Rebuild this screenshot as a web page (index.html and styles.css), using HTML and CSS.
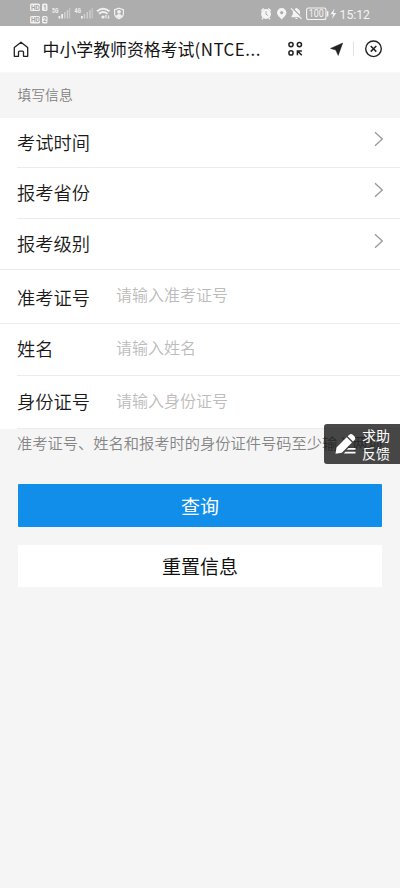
FILE: index.html
```
<!DOCTYPE html>
<html lang="zh-CN">
<head>
<meta charset="utf-8">
<meta name="viewport" content="width=device-width, initial-scale=1">
<title>中小学教师资格考试(NTCE)</title>
<link rel="stylesheet" href="styles.css">
</head>
<body>
<header class="status">
  <svg class="status-left" width="100" height="26" viewBox="0 0 100 26">
    <g fill="#f1f1f1">
      <rect x="0" y="3.500" width="10" height="7.500" rx="1.500"/><rect x="12" y="3.500" width="5.500" height="7.500" rx="1.500"/>
      <rect x="0" y="16" width="10" height="7.500" rx="1.500"/><rect x="12" y="16" width="5.500" height="7.500" rx="1.500"/>
    </g>
    <g class="tiny" fill="#a6a6a6">
      <text x="1" y="9.700">HD</text><text x="13" y="9.700">1</text>
      <text x="1" y="22.200">HD</text><text x="13" y="22.200">2</text>
    </g>
    <g class="tiny" fill="#f1f1f1"><text x="22" y="12.500" textLength="6.300" lengthAdjust="spacingAndGlyphs">5G</text><text x="44.500" y="12.500" textLength="6.300" lengthAdjust="spacingAndGlyphs">4G</text></g>
    <g fill="#f1f1f1">
      <path d="M28.500 16h1.700v2.500h-1.700zM31.300 14h1.700v4.500h-1.700z"/>
      <path opacity=".5" d="M34 12h1.500v6.500h-1.500zM36.700 10h1.500v8.500h-1.500zM39.200 8h1v10.500h-1z"/>
      <path d="M51 16h1.700v2.500h-1.700z"/>
      <path opacity=".5" d="M53.700 14h1.500v4.500h-1.500zM56.500 12h1.500v6.500h-1.500zM59.200 10h1.500v8.500h-1.500zM61.700 8h1v10.500h-1z"/>
      <circle cx="73" cy="17" r="1.600"/>
    </g>
    <path d="M67 11.200q6-5 12.500 0M69 13.700q4.200-3.400 8.500 0" fill="none" stroke="#f1f1f1" stroke-width="1.900"/>
    <path d="M76 18.500v-3.300l-1 1.200M78.300 15.200v3.300l1-1.200" stroke="#f1f1f1" fill="none"/>
    <path d="M89 8.200l4.400 1.400v4c0 2.700-2 4.300-4.400 5.200-2.400-.9-4.400-2.500-4.400-5.200v-4z" fill="none" stroke="#f1f1f1" stroke-width="1.200"/>
    <circle cx="89" cy="11.800" r="1.900" fill="#f1f1f1"/><path d="M85.800 16q3.200-4 6.400 0l-3.200 2.200z" fill="#f1f1f1"/>
  </svg>
  <svg class="status-right" width="115" height="26" viewBox="0 0 115 26">
    <g fill="#f4f4f4">
      <circle cx="6" cy="14" r="4.900"/>
      <path d="M21.700 8a4.700 4.700 0 0 1 4.700 4.700c0 2.600-2.700 4.400-4.700 6.800-2-2.400-4.700-4.200-4.700-6.800a4.700 4.700 0 0 1 4.700-4.700z"/>
      <path d="M31.500 17.300v-1.200l1.300-1.300v-2.500q0-2.900 2.700-3.600v-.8h1.800v.8q2.700.7 2.700 3.600v2.500l1.300 1.300v1.200zM34.800 18h3.200q-1.600 2-3.200 0z"/>
      <path d="M74.500 8.500l-4 5.800h2.700l-1.200 4.700 4.200-6h-2.700z"/>
      <rect x="67" y="11" width="1.400" height="5.500" rx=".5"/>
    </g>
    <path d="M1.200 10.700l2.500-2.200M8.300 8.500l2.500 2.200M3 18l-1 1.200M9 18l1 1.200" stroke="#f4f4f4" stroke-width="1.400"/>
    <path d="M6 11.200v3l2 1.300" stroke="#adadad" fill="none"/>
    <circle cx="21.700" cy="12.700" r="1.600" fill="#adadad"/>
    <path d="M32 7.700l10 10" stroke="#adadad" stroke-width="1.600"/><path d="M31 8.300l10.500 10.500" stroke="#f4f4f4" stroke-width="1.200"/>
    <rect x="46.600" y="8" width="19.400" height="11.500" rx="2" fill="none" stroke="#f4f4f4" stroke-width="1.100"/>
    <text class="battery" x="48.800" y="17.400" textLength="15" lengthAdjust="spacingAndGlyphs">100</text>
    <text class="clock" x="79.500" y="18.700" textLength="30.500" lengthAdjust="spacingAndGlyphs">15:12</text>
  </svg>
</header>

<nav class="nav">
  <svg class="home" width="16" height="17" viewBox="0 0 16 17"><path d="M1.300 6.600L8 1.200l6.700 5.400v8.700h-4.200v-4.200q0-1-1-1h-3q-1 0-1 1v4.200H1.300z" fill="none" stroke="#222" stroke-width="1.300" stroke-linejoin="round"/></svg>
  <h1 class="title">中小学教师资格考试<span class="latin">(NTCE...</span></h1>
  <svg class="tools" width="100" height="20" viewBox="0 0 100 20">
    <g fill="none" stroke="#222" stroke-width="1.500">
      <circle cx="6" cy="5.600" r="2.100"/><circle cx="14.400" cy="5.600" r="2.100"/><circle cx="6" cy="13.900" r="2.100"/>
      <path d="M12.400 16.300v-4.400h4.500M12.600 12l4.200 4.300"/>
    </g>
    <path d="M57.700 4l-4.500 12.400-2.400-5.300-5.300-1.700z" fill="#222" stroke="#222" stroke-width=".5" stroke-linejoin="round"/>
    <path d="M68.500 2.500v14.500" stroke="#e2e2e2"/>
    <circle cx="88.500" cy="9.800" r="7.800" fill="none" stroke="#222" stroke-width="1.400"/>
    <path d="M85.700 7l5.600 5.600M91.300 7l-5.600 5.600" stroke="#222" stroke-width="1.500"/>
  </svg>
</nav>

<main>
  <h2 class="section">填写信息</h2>
  <div class="form">
    <div class="row pick"><span class="label">考试时间</span><svg class="chev" width="10" height="16" viewBox="0 0 10 16"><path d="M1 1.300l7.300 6.700L1 14.700" /></svg></div>
    <div class="row pick"><span class="label">报考省份</span><svg class="chev" width="10" height="16" viewBox="0 0 10 16"><path d="M1 1.300l7.300 6.700L1 14.700" /></svg></div>
    <div class="row pick full"><span class="label">报考级别</span><svg class="chev" width="10" height="16" viewBox="0 0 10 16"><path d="M1 1.300l7.300 6.700L1 14.700" /></svg></div>
    <div class="row entry full"><span class="label">准考证号</span><span class="placeholder">请输入准考证号</span></div>
    <div class="row entry name"><span class="label">姓名</span><span class="placeholder">请输入姓名</span></div>
    <div class="row entry last"><span class="label">身份证号</span><span class="placeholder">请输入身份证号</span></div>
  </div>
  <p class="hint">准考证号、姓名和报考时的身份证件号码至少输入两项</p>
  <div class="actions">
    <div class="btn primary">查询</div>
    <div class="btn">重置信息</div>
  </div>
</main>

<aside class="help">
  <svg width="24" height="24" viewBox="0 0 24 24" fill="#fff"><path d="M1.500 21.800l1-6.300L12.700 5.300l5.300 5.300L7.800 20.800zM13.700 4.300l1.600-1.600q1.700-1.500 3.400 0l1.900 1.900q1.500 1.700 0 3.400L19 9.600zM14.500 16h7v1.700h-8.700zM11.500 19.700h10v1.700H9.800z"/></svg>
  <span>求助<br>反馈</span>
</aside>
</body>
</html>
```

FILE: styles.css
```
* { box-sizing: border-box; }
body {
  position: relative;
  margin: 0;
  min-height: 888px;
  background: #f5f5f5;
  color: #222;
  font-family: "Noto Sans CJK SC", sans-serif;
  font-weight: 350;
}
.status {
  display: flex;
  justify-content: space-between;
  height: 26px;
  padding: 0 25px 0 30px;
  background: #adadad;
}
.tiny { font: bold 6.500px "Roboto", sans-serif; }
.battery { font: 10.500px "Roboto", sans-serif; fill: #f4f4f4; }
.clock { font: 13.500px "Roboto", sans-serif; fill: #f4f4f4; }
.nav {
  display: flex;
  align-items: center;
  height: 47px;
  padding: 0 15px 0 13px;
  background: #fff;
  border-bottom: 1px solid #f8f8f8;
}
.title {
  margin: 0 0 0 13.500px;
  font-size: 16.900px;
  font-weight: 400;
  line-height: 24px;
  white-space: nowrap;
  color: #151515;
}
.latin { letter-spacing: .5px; }
.tools { margin-left: auto; }
.section {
  height: 45px;
  margin: 0;
  padding-left: 17.500px;
  font-size: 13.800px;
  font-weight: 350;
  line-height: 42px;
  color: #808080;
}
.form { background: #fff; }
.row {
  display: flex;
  align-items: center;
  margin-left: 17px;
  border-bottom: 1px solid #ececec;
}
.pick { height: 51px; justify-content: space-between; padding-right: 16px; }
.pick:first-child { height: 50px; }
.full { margin-left: 0; padding-left: 17px; }
.entry { height: 53px; }
.entry.full { height: 54px; }
.entry.name { height: 52px; }
.label { flex: none; width: 99px; margin-bottom: 2px; font-size: 18.250px; line-height: 26px; color: #1a1a1a; }
.entry .label { margin-bottom: 3px; }
.entry.full .label { margin-bottom: 0; }
.chev { margin-bottom: 7px; }
.chev path { fill: none; stroke: #999; stroke-width: 1.300; }
.placeholder { margin-bottom: 5px; font-size: 16px; line-height: 24px; color: #bcbcbc; }
.hint {
  height: 30px;
  margin: 0 0 25px;
  padding-left: 17px;
  font-size: 15.250px;
  line-height: 27px;
  white-space: nowrap;
  color: #858585;
}
.actions { display: grid; gap: 18px; padding: 0 18px; }
.btn {
  height: 42.500px;
  border-radius: 1px;
  background: #fff;
  font-size: 19px;
  font-weight: 400;
  line-height: 42px;
  text-align: center;
  color: #111;
}
.primary { background: #108ee9; color: #fff; line-height: 43.500px; }
.help {
  position: absolute;
  top: 424px;
  right: 0;
  display: flex;
  align-items: center;
  gap: 4px;
  width: 76px;
  height: 40px;
  padding-left: 10px;
  border-radius: 3px 0 0 3px;
  background: rgba(8, 8, 8, .74);
  color: #fff;
  font-size: 14px;
  font-weight: 400;
  line-height: 18.500px;
}
```
